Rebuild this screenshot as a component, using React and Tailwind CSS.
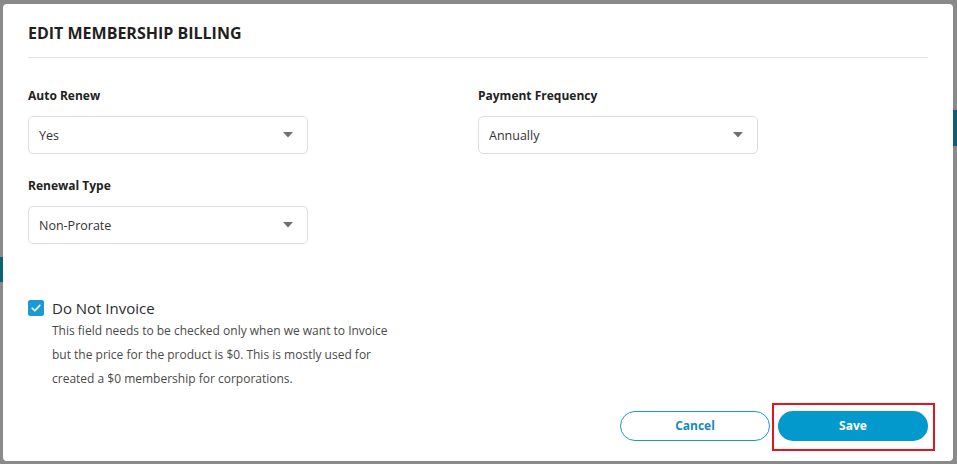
import React from "react";

function Caret() {
  return (
    <svg width="10" height="6" viewBox="0 0 10 6" className="shrink-0">
      <path d="M0 0 L10 0 L5 5.5 Z" fill="#707070" />
    </svg>
  );
}

function Select({ value }) {
  return (
    <div className="flex h-[38px] w-[280px] items-center justify-between rounded-[5px] border border-[#dadde3] bg-white pl-[10px] pr-[14px]">
      <span className="pt-[3px] text-[12.5px] text-[#333333]">{value}</span>
      <Caret />
    </div>
  );
}

function Field({ label, value }) {
  return (
    <div className="flex flex-col">
      <div className="h-[16px] text-[12px] font-bold leading-[16px] text-[#222222]">{label}</div>
      <div className="mt-[12px]">
        <Select value={value} />
      </div>
    </div>
  );
}

export default function App() {
  return (
    <div
      className="flex h-[464px] w-[957px] overflow-hidden bg-[#8a8a8a]"
      style={{ fontFamily: '"Open Sans", "Noto Sans", sans-serif' }}
    >
      <div className="flex w-[3px] flex-col">
        <div className="h-[257px]" />
        <div className="h-[25px] bg-[#0d6179]" />
      </div>

      <div className="mt-[4px] flex h-[457px] w-[950px] flex-col rounded-[4px] bg-white px-[25px] pt-[17px]">
        <div className="h-[24px] text-[16px] font-bold leading-[24px] text-[#1f1f1f]">EDIT MEMBERSHIP BILLING</div>
        <div className="mt-[12px] h-px bg-[#dfe2e6]" />

        <div className="mt-[30px] grid grid-cols-2">
          <Field label="Auto Renew" value="Yes" />
          <Field label="Payment Frequency" value="Annually" />
          <div className="mt-[24px]">
            <Field label="Renewal Type" value="Non-Prorate" />
          </div>
        </div>

        <div className="mt-[53px] flex flex-col">
          <div className="flex h-[22px] items-center">
            <div className="flex h-[16px] w-[16px] items-center justify-center rounded-[2px] bg-[#1b9ad6]">
              <svg width="12" height="12" viewBox="0 0 12 12">
                <path d="M2.2 6.2 L4.8 8.8 L9.8 3.4" fill="none" stroke="white" strokeWidth="1.6" strokeLinecap="round" strokeLinejoin="round" />
              </svg>
            </div>
            <span className="ml-[8px] text-[15px] leading-[22px] text-[#2c2c2c]">Do Not Invoice</span>
          </div>
          <div className="ml-[24px] text-[12px] leading-[24px] text-[#4a4a4a]">
            <div>This field needs to be checked only when we want to Invoice</div>
            <div>but the price for the product is $0. This is mostly used for</div>
            <div>created a $0 membership for corporations.</div>
          </div>
        </div>

        <div className="mt-[20px] flex justify-end gap-[8px]">
          <button className="h-[30px] w-[150px] rounded-full border border-[#1a98cf] bg-white text-[12px] font-bold text-[#1789bd]">
            Cancel
          </button>
          <div className="relative">
            <button className="h-[30px] w-[150px] rounded-full bg-[#0399cc] text-[12px] font-bold text-white">
              Save
            </button>
            <div className="pointer-events-none absolute -bottom-[10px] -left-[6px] -right-[7px] -top-[8px] border-2 border-[#e3161f]" />
          </div>
        </div>
      </div>

      <div className="flex w-[4px] flex-col">
        <div className="h-[110px]" />
        <div className="h-[36px] bg-[#0d5e74]" />
      </div>
    </div>
  );
}
